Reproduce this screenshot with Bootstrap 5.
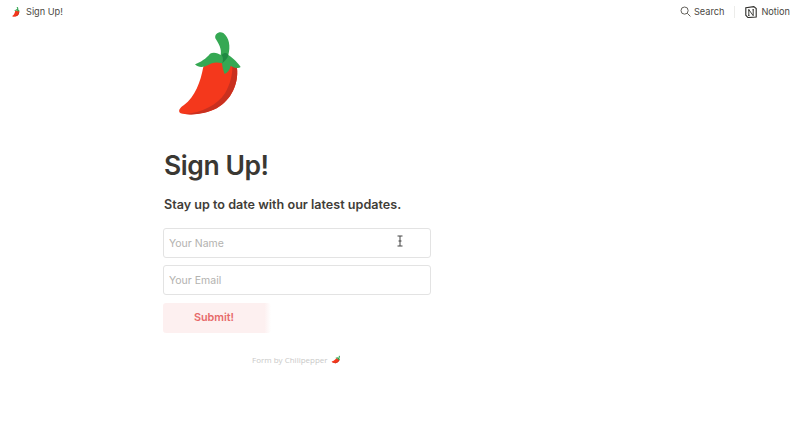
<!DOCTYPE html>
<html lang="en"><head><meta charset="utf-8"><title>Sign Up!</title>
<link href="https://cdn.jsdelivr.net/npm/bootstrap@5.3.0/dist/css/bootstrap.min.css" rel="stylesheet">
<style>
html,body{height:426px;overflow:hidden;background:#fff}
body{font-family:Inter,"Liberation Sans",sans-serif;color:#37352f}
.topbar{height:24px;padding:0 10px 0 10px;font-size:9.2px;color:#4a4843}
.crumb-ico{width:12px;height:12px;margin-right:4px}
.sep{width:1px;height:12px;background:#ececea;margin:0 10px 0 10px}
.search-ico{margin-right:3px}
.sheet{width:268px;margin-left:163px}
.hero{width:100px;height:100px;display:block;margin-left:-3px;margin-top:1px}
.title{font-size:26.5px;font-weight:600;line-height:32px;letter-spacing:-.45px;margin:24px 0 0 1px;color:#3a3833}
.sub{font-size:12.6px;font-weight:600;line-height:18px;margin:15px 0 14px 1px;color:#3f3d38}
.fld{height:30px;border:1px solid #e3e3e3;border-radius:3px;padding:0 5px;font-size:10.5px;color:#37352f;box-shadow:none;margin-bottom:7px;font-family:inherit;background:#fff}
.fld::placeholder{color:#b3b2af;opacity:1}
.go{width:108px;height:30px;border:0;border-radius:3px;background:linear-gradient(90deg,#fdf0f0 94%,#fff);color:#e76a6a;font-size:10.8px;font-weight:600;padding:0 6px 0 0;margin-top:8px}
.credit{font-size:8px;color:#c9c9c8;margin-top:21px;padding-left:89px;line-height:10px;font-family:"Open Sans",sans-serif;white-space:nowrap}
.credit svg{width:11px;height:11px;vertical-align:-2px;transform:rotate(25deg);margin-left:1px}
.cursor{position:absolute;left:396px;top:235px;width:8px;height:12px}
</style></head><body>
<svg width="0" height="0" class="position-absolute"><defs><symbol id="chili" viewBox="0 0 300 300">
<path fill="#f4381c" d="M130 125C150 105 205 105 231 130C236 175 215 225 170 250C135 268 85 272 62 265C52 258 60 248 72 240C105 215 122 170 130 125Z"/>
<path fill="#c9301f" d="M217 122L231 130C236 175 215 225 170 250C135 268 100 270 75 267C125 264 172 240 195 205C210 178 218 150 217 122Z"/>
<path fill="#35a853" d="M105 118C120 112 140 100 150 86C160 80 175 84 182 90C186 72 176 56 166 40C163 26 178 18 190 24C208 38 212 65 205 90C220 100 235 115 242 126C235 132 222 128 212 122C210 132 205 142 194 147C190 138 187 128 186 115C170 110 155 112 145 120C130 128 115 128 105 118Z"/>
<path fill="#1f8a43" d="M185 90C190 98 190 108 186 115C195 108 203 100 205 90C200 82 192 82 185 90Z"/>
</symbol></defs></svg>
<header class="topbar d-flex align-items-center justify-content-between">
<div class="d-flex align-items-center"><svg class="crumb-ico"><use href="#chili"/></svg><span>Sign Up!</span></div>
<div class="d-flex align-items-center">
<svg width="11" height="11" viewBox="0 0 12 12" fill="none" stroke="#55534e" stroke-width="1" class="search-ico"><circle cx="5" cy="5" r="3.9"/><path d="M8 8l3.4 3.4"/></svg>
<span>Search</span><span class="sep"></span>
<svg width="12" height="12" viewBox="0 0 12 12" class="me-1"><path fill="#fff" stroke="#2d2c28" stroke-width="1.1" d="M.8 1.8 8.8.6l2.4 1.9v8.6l-8.3.4L.8 9.2Z"/><path fill="none" stroke="#2d2c28" stroke-width=".9" d="M3 3.9h1.6M3.8 3.9v5.5M3 9.4h1.6M4 3.9l4.2 5.8V3.7M7.4 3.7h1.6"/></svg>
<span>Notion</span>
</div></header>
<main class="sheet">
<svg class="hero"><use href="#chili"/></svg>
<h1 class="title">Sign Up!</h1>
<p class="sub">Stay up to date with our latest updates.</p>
<form>
<input class="form-control fld" placeholder="Your Name">
<input class="form-control fld" placeholder="Your Email">
<button type="button" class="btn go d-block">Submit!</button>
</form>
<div class="credit">Form by Chilipepper <svg><use href="#chili"/></svg></div>
</main>
<svg class="cursor" viewBox="0 0 8 12" fill="none" stroke="#444" stroke-width="1"><path d="M1.5 1h5M4 1v10M1.5 11h5M2.5 6h3"/></svg>
</body></html>
